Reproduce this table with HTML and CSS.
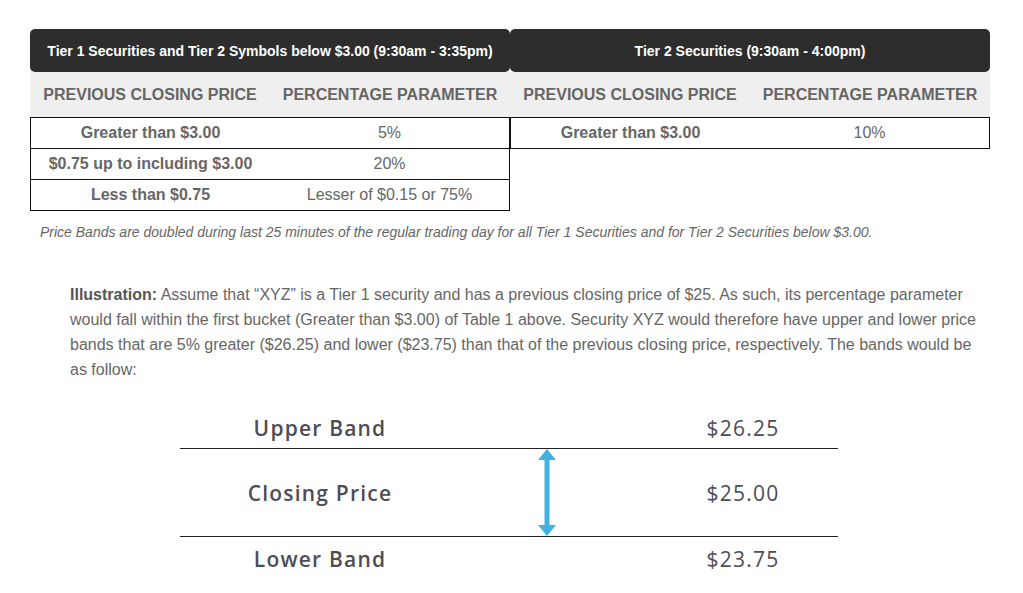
FILE: index.html
```html
<html>

<head>
  <meta charset="utf8">
  <title>Price Bands</title>
  <link rel="stylesheet" href="styles.css">
</head>

<body>
  <section class="wrapper">
    <div class="tables">
      <table class="band-table">
        <thead>
          <tr>
            <th class="tier" colspan="2">Tier 1 Securities and Tier 2 Symbols below $3.00 (9:30am - 3:35pm)</th>
          </tr>
          <tr>
            <th class="col-head">PREVIOUS CLOSING PRICE</th>
            <th class="col-head">PERCENTAGE PARAMETER</th>
          </tr>
        </thead>
        <tbody>
          <tr>
            <td class="price">Greater than $3.00</td>
            <td class="pct">5%</td>
          </tr>
          <tr>
            <td class="price">$0.75 up to including $3.00</td>
            <td class="pct">20%</td>
          </tr>
          <tr>
            <td class="price">Less than $0.75</td>
            <td class="pct">Lesser of $0.15 or 75%</td>
          </tr>
        </tbody>
      </table>
      <table class="band-table">
        <thead>
          <tr>
            <th class="tier" colspan="2">Tier 2 Securities (9:30am - 4:00pm)</th>
          </tr>
          <tr>
            <th class="col-head">PREVIOUS CLOSING PRICE</th>
            <th class="col-head">PERCENTAGE PARAMETER</th>
          </tr>
        </thead>
        <tbody>
          <tr>
            <td class="price">Greater than $3.00</td>
            <td class="pct">10%</td>
          </tr>
        </tbody>
      </table>
    </div>
    <p class="note">Price Bands are doubled during last 25 minutes of the regular trading day for all Tier 1 Securities and for Tier 2 Securities below $3.00.</p>

    <p class="illustration"><strong>Illustration:</strong> Assume that “XYZ” is a Tier 1 security and has a previous closing price of $25. As such, its percentage parameter would fall within the first bucket (Greater than $3.00) of Table 1 above. Security XYZ would therefore have upper and lower price bands that are 5% greater ($26.25) and lower ($23.75) than that of the previous closing price, respectively. The bands would be as follow:</p>

    <div class="bands">
      <div class="band-row upper">
        <div class="label">Upper Band</div>
        <div class="arrow-cell"></div>
        <div class="value">$26.25</div>
      </div>
      <div class="band-row middle">
        <div class="label">Closing Price</div>
        <div class="arrow-cell">
          <svg width="20" height="87" viewBox="0 0 20 87">
            <polygon points="10,0 19,11 12.5,11 12.5,76 19,76 10,87 1,76 7.5,76 7.5,11 1,11" fill="#3fb2e0"/>
          </svg>
        </div>
        <div class="value">$25.00</div>
      </div>
      <div class="band-row lower">
        <div class="label">Lower Band</div>
        <div class="arrow-cell"></div>
        <div class="value">$23.75</div>
      </div>
    </div>
  </section>
</body>

</html>
```

FILE: styles.css
```css
* {
  margin: 0;
  padding: 0;
}

body {
  font-family: "Liberation Sans", Arial, sans-serif;
  font-size: 16px;
  color: #666;
  background: #fff;
}

.wrapper {
  width: 960px;
  margin: 29px 0 0 30px;
}

.tables {
  display: flex;
  align-items: flex-start;
}

.band-table {
  width: 480px;
  border-collapse: separate;
  border-spacing: 0;
  table-layout: fixed;
}

.band-table .tier {
  height: 43px;
  background-color: #2d2d2d;
  color: #fff;
  font-size: 14px;
  font-weight: bold;
  text-align: center;
  border-radius: 5px;
}

.band-table .col-head {
  height: 45px;
  background-color: #efefef;
  color: #666;
  font-size: 16px;
  font-weight: bold;
  text-align: center;
}

.band-table td {
  height: 31px;
  text-align: center;
  font-size: 16px;
  color: #666;
  border-bottom: 1px solid #111;
}

.band-table tbody tr:first-child td {
  border-top: 1px solid #111;
  height: 32px;
}

.band-table td.price {
  font-weight: bold;
  border-left: 1px solid #111;
}

.band-table td.pct {
  border-right: 1px solid #111;
}

.note {
  margin: 13px 0 0 10px;
  font-size: 14px;
  font-style: italic;
  color: #666;
}

.illustration {
  width: 910px;
  margin: 42px 0 0 40px;
  line-height: 25px;
  font-size: 16px;
  color: #666;
}

.illustration strong {
  color: #555;
}

.bands {
  width: 658px;
  margin: 26px 0 0 150px;
  font-family: "Open Sans", "Liberation Sans", sans-serif;
  font-size: 21px;
  color: #4d4d55;
  letter-spacing: 1.2px;
}

.band-row {
  display: grid;
  grid-template-columns: 280px 174px 1fr;
  align-items: center;
}

.band-row.upper {
  height: 40px;
  border-bottom: 1px solid #222;
}

.band-row.middle {
  height: 87px;
}

.band-row.lower {
  height: 44px;
  border-top: 1px solid #222;
}

.band-row .label {
  text-align: center;
  font-weight: 600;
}

.band-row .value {
  text-align: center;
  padding-left: 14px;
}

.arrow-cell {
  display: flex;
  justify-content: center;
  align-self: stretch;
  align-items: center;
}

.arrow-cell svg {
  display: block;
}
```
